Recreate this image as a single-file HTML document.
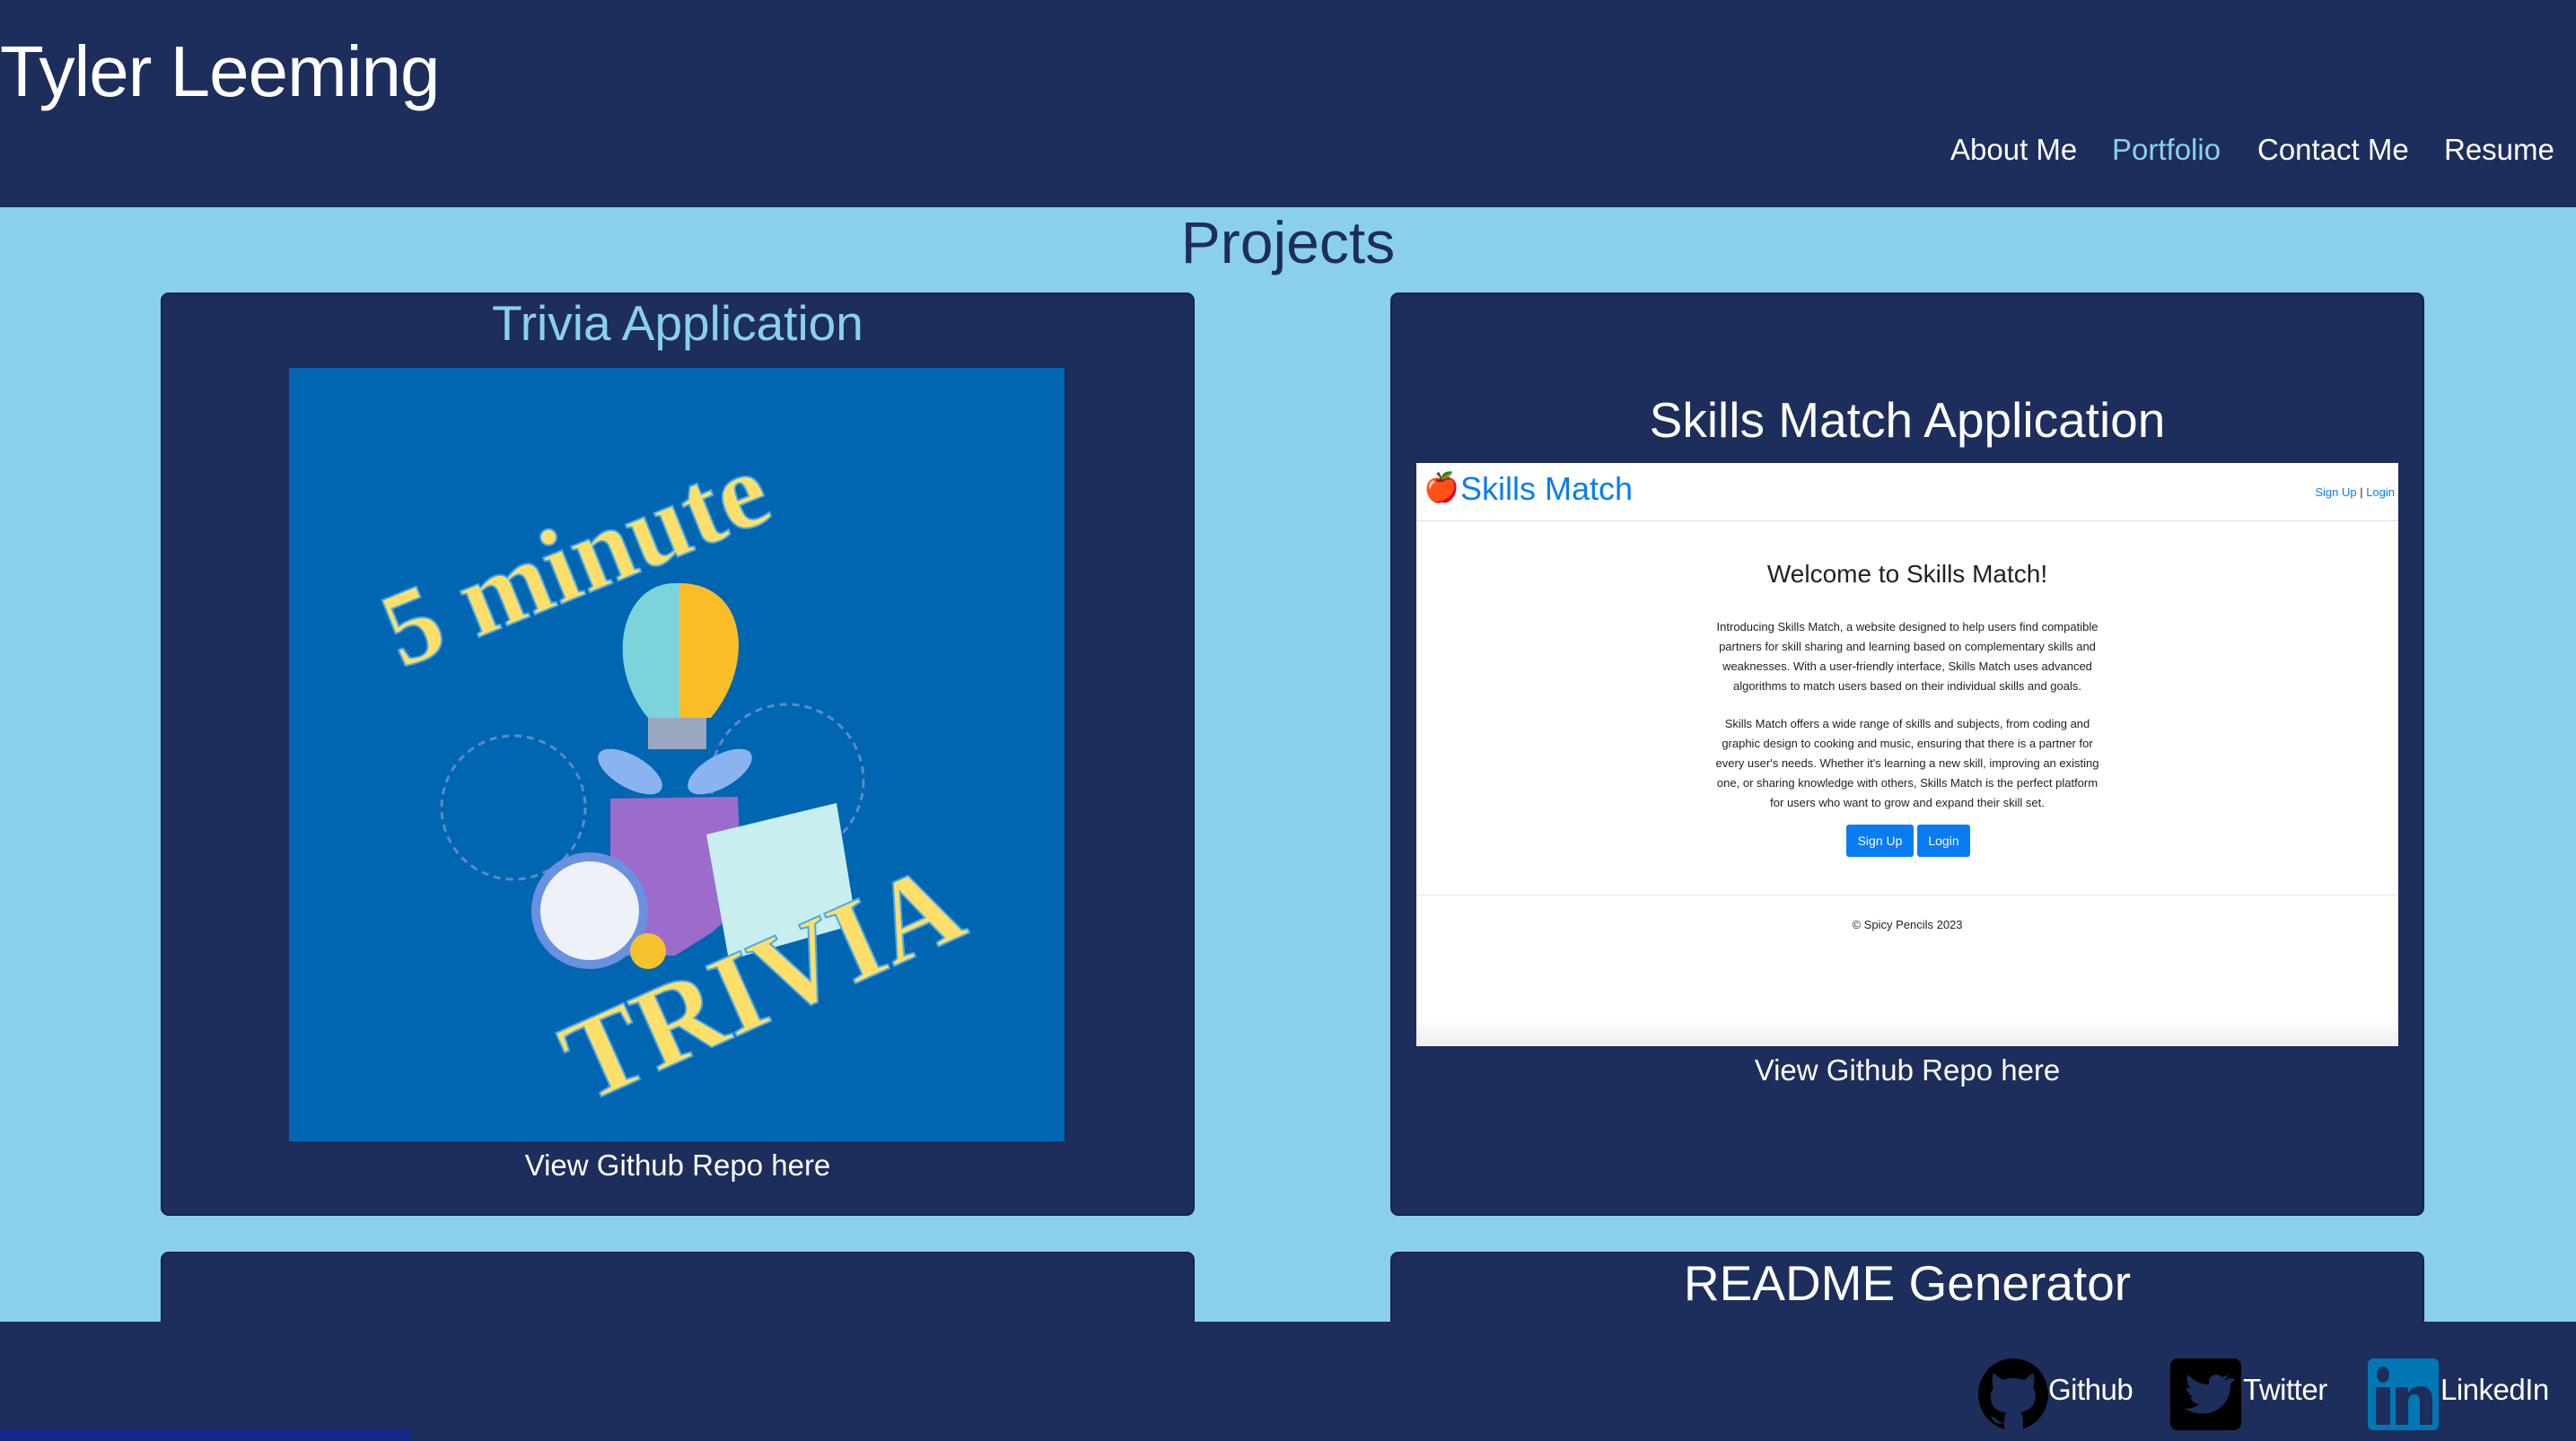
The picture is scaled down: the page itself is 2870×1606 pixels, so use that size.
<!DOCTYPE html>
<html><head><meta charset="utf-8"><style>
*{margin:0;padding:0;box-sizing:border-box}
body{width:2870px;height:1606px;overflow:hidden;background:#8ad0ee;font-family:"Liberation Sans",sans-serif;position:relative}
.hdr{position:absolute;left:0;top:0;width:2870px;height:231px;background:#1d2d5c}
.title{position:absolute;left:0;top:34px;color:#fff;font-size:80px;letter-spacing:-1px}
.nav{position:absolute;top:148px;color:#fff;font-size:33px}
.h2{position:absolute;left:0;width:2870px;text-align:center;top:232px;font-size:66px;color:#1d2d5c}
.card{position:absolute;background:#1d2d5c;border:2px solid #14224a;border-radius:9px}
.ct{position:absolute;left:0;right:0;text-align:center;font-size:55px}
.link{position:absolute;left:0;right:0;text-align:center;color:#fff;font-size:33px}
.ftr{position:absolute;left:0;top:1473px;width:2870px;height:133px;background:#1d2d5c}
.fl{position:absolute;top:1530px;color:#fff;font-size:33px;letter-spacing:-0.5px}
.sm{position:absolute;left:1578px;top:516px;width:1094px;height:650px;background:#fff;overflow:hidden}
.sm p{position:absolute;left:0;right:0;text-align:center;color:#222;font-size:13px;line-height:22px}
</style></head><body>
<div class="hdr">
<div class="title">Tyler Leeming</div>
<div class="nav" style="left:2173px">About Me</div>
<div class="nav" style="left:2353px;color:#8bd0f0">Portfolio</div>
<div class="nav" style="left:2515px">Contact Me</div>
<div class="nav" style="left:2723px">Resume</div>
</div>
<div class="h2">Projects</div>

<div class="card" style="left:179px;top:326px;width:1152px;height:1029px">
<div class="ct" style="top:0px;color:#8ad0ee">Trivia Application</div>
<div class="link" style="top:952px">View Github Repo here</div>
</div>
<svg style="position:absolute;left:322px;top:410px" width="864" height="862" viewBox="0 0 864 862">
<rect width="864" height="862" fill="#0066b2"/>
<circle cx="250" cy="490" r="80" fill="none" stroke="#5a8cc8" stroke-width="3" stroke-dasharray="8 6"/>
<circle cx="555" cy="460" r="85" fill="none" stroke="#5a8cc8" stroke-width="3" stroke-dasharray="8 6"/>
<path d="M358 480 L500 478 L505 600 L470 630 L430 655 L358 655 Z" fill="#9b6ccc"/>
<path d="M430 240 C370 240 350 330 400 390 L435 390 L435 240 Z" fill="#7dd3da"/>
<path d="M435 240 C510 240 520 330 470 390 L435 390 Z" fill="#fbbd27"/>
<rect x="400" y="390" width="65" height="35" fill="#9aa7c0"/>
<ellipse cx="380" cy="450" rx="40" ry="18" fill="#8ab4f0" transform="rotate(30 380 450)"/>
<ellipse cx="480" cy="450" rx="40" ry="18" fill="#8ab4f0" transform="rotate(-30 480 450)"/>
<path d="M465 520 L610 485 L632 620 L490 660 Z" fill="#c8eef0"/>
<circle cx="335" cy="605" r="65" fill="#6a90e0"/>
<circle cx="335" cy="605" r="55" fill="#eef2f8"/>
<circle cx="400" cy="650" r="20" fill="#f4c22c"/>
<g font-family="Liberation Serif,serif" font-weight="bold" fill="#fedf6a" stroke="#4aa8e8" stroke-width="2">
<text x="125" y="335" font-size="120" transform="rotate(-22 125 335)">5 minute</text>
<text x="330" y="820" font-size="130" transform="rotate(-24 330 820)">TRIVIA</text>
</g>
</svg>

<div class="card" style="left:1549px;top:326px;width:1152px;height:1029px">
<div class="ct" style="top:108px;color:#fff">Skills Match Application</div>
<div class="link" style="top:846px">View Github Repo here</div>
</div>
<div class="sm">
<div style="position:absolute;left:8px;top:8px;font-size:32px">🍎</div>
<div style="position:absolute;left:49px;top:8px;font-size:36px;color:#0a7cf2">Skills Match</div>
<div style="position:absolute;right:4px;top:25px;font-size:13px;color:#0a7cf2">Sign Up <span style="color:#222">|</span> Login</div>
<div style="position:absolute;left:0;right:0;top:64px;height:1px;background:#ddd"></div>
<div style="position:absolute;left:0;right:0;top:108px;text-align:center;font-size:28px;color:#222">Welcome to Skills Match!</div>
<p style="top:172px">Introducing Skills Match, a website designed to help users find compatible<br>partners for skill sharing and learning based on complementary skills and<br>weaknesses. With a user-friendly interface, Skills Match uses advanced<br>algorithms to match users based on their individual skills and goals.</p>
<p style="top:280px">Skills Match offers a wide range of skills and subjects, from coding and<br>graphic design to cooking and music, ensuring that there is a partner for<br>every user's needs. Whether it's learning a new skill, improving an existing<br>one, or sharing knowledge with others, Skills Match is the perfect platform<br>for users who want to grow and expand their skill set.</p>
<div style="position:absolute;left:479px;top:403px;width:75px;height:36px;background:#0a7cf2;border-radius:3px;color:#fff;font-size:14px;line-height:36px;text-align:center">Sign Up</div>
<div style="position:absolute;left:558px;top:403px;width:59px;height:36px;background:#0a7cf2;border-radius:3px;color:#fff;font-size:14px;line-height:36px;text-align:center">Login</div>
<div style="position:absolute;left:0;right:0;top:481px;height:1px;background:#e6e6e6"></div>
<p style="top:504px">© Spicy Pencils 2023</p>
<div style="position:absolute;left:0;right:0;bottom:0;height:30px;background:linear-gradient(#fff,#eee)"></div>
</div>

<div class="card" style="left:179px;top:1395px;width:1152px;height:200px"></div>
<div class="card" style="left:1549px;top:1395px;width:1152px;height:200px">
<div class="ct" style="top:1px;color:#fff">README Generator</div>
</div>

<div class="ftr"></div>
<svg style="position:absolute;left:2203px;top:1514px" width="80" height="80" viewBox="0 0 80 80">
<ellipse cx="40" cy="40" rx="39" ry="40" fill="#000"/>
<path fill="#1d2d5c" d="M18 16 L28 24 C36 21 44 21 52 24 L62 16 C64 22 64 28 62 32 C66 38 66 46 62 52 C58 58 50 60 48 60 C50 62 51 66 51 70 L51 80 L30 80 L30 72 C24 74 18 72 15 64 C18 65 22 68 24 70 C26 72 29 72 30 70 C30 66 31 62 32 60 C28 60 20 58 17 52 C14 46 14 38 18 32 C16 28 16 22 18 16 Z"/>
</svg>
<div class="fl" style="left:2282px">Github</div>
<svg style="position:absolute;left:2418px;top:1514px" width="80" height="80" viewBox="0 0 80 80"><rect width="79" height="80" rx="8" fill="#000"/><path fill="#1d2d5c" d="M66 22c-2 1-4 2-6 2 2-1 4-4 5-6-2 1-5 2-7 3-6-6-17-2-15 8-10 0-18-5-23-11-3 5-1 12 3 15-2 0-3 0-5-1 0 5 4 10 8 11-1 0-3 1-4 0 1 4 5 7 10 8-5 4-10 5-16 5 25 14 52 0 51-28 2-1 4-3 5-5z"/></svg>
<div class="fl" style="left:2499px">Twitter</div>
<svg style="position:absolute;left:2638px;top:1514px" width="80" height="80" viewBox="0 0 80 80"><rect width="79" height="80" rx="6" fill="#0077b5"/><ellipse cx="17" cy="18" rx="7" ry="9" fill="#1d2d5c"/><rect x="9" y="32" width="16" height="42" fill="#1d2d5c"/><path fill="#1d2d5c" d="M31 32h14v6c3-5 8-7 14-7 9 0 13 6 13 15v28H58V48c0-5-2-8-6-8s-7 3-7 8v26H31z"/></svg>
<div class="fl" style="left:2719px">LinkedIn</div>
<div style="position:absolute;left:0;top:1593px;width:458px;height:13px;background:#132a8a;border-top-right-radius:5px"></div>
</body></html>
